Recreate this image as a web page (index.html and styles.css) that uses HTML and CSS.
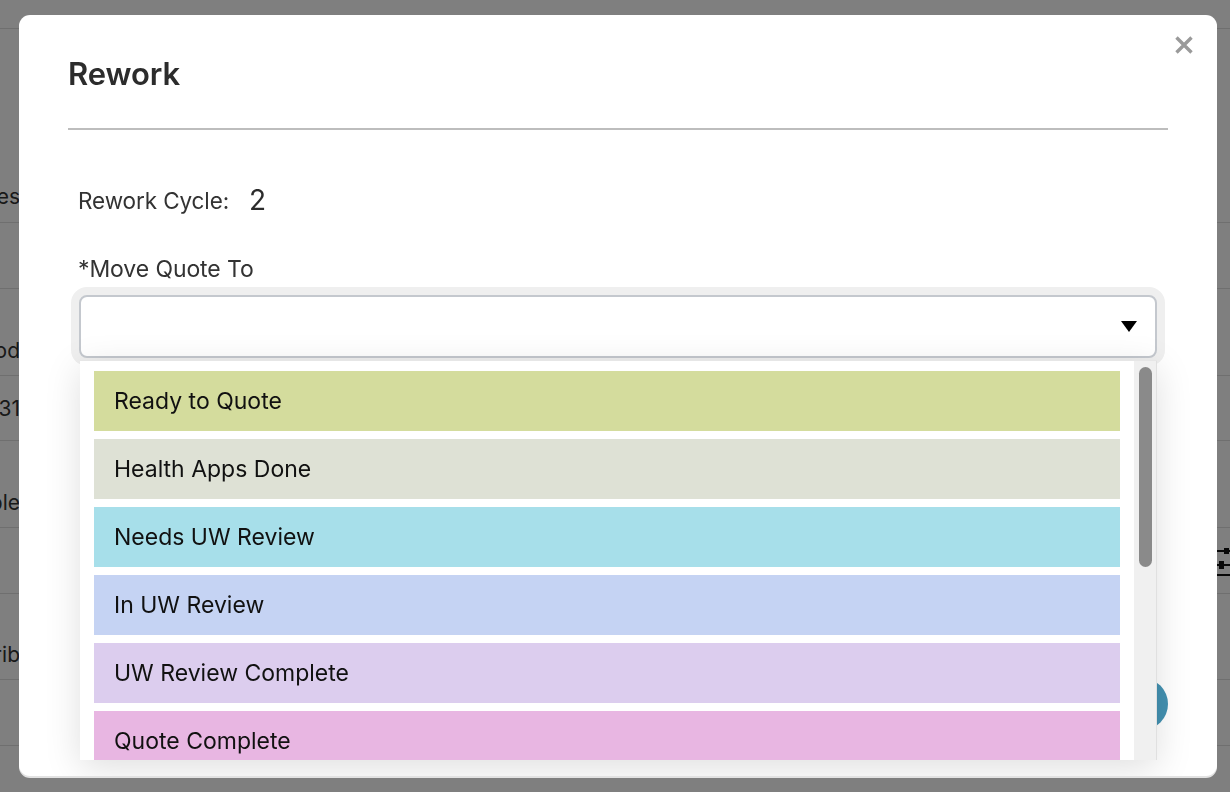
FILE: index.html
```html
<!DOCTYPE html>
<html lang="en">
<head>
<meta charset="utf-8">
<title>Rework</title>
<link rel="stylesheet" href="styles.css">
</head>
<body>
<div class="page">
  <div class="row h28"></div>
  <div class="row h194"><div class="cell"><span>Notes</span></div></div>
  <div class="row h66"></div>
  <div class="row h87"><div class="cell"><span>Good</span></div></div>
  <div class="row h65 mid"><div class="cell"><span>$131</span></div></div>
  <div class="row h87"><div class="cell"><span>Sample</span></div></div>
  <div class="row h66 mid">
    <div class="cell"></div>
    <div class="spacer"></div>
    <svg class="sliders" width="16" height="34" viewBox="0 0 16 34">
      <path d="M0 7h16M0 21h16M0 31h16" stroke="#111" stroke-width="2"/>
      <rect x="8" y="4" width="5" height="6" fill="#111"/>
      <rect x="3" y="17" width="5" height="8" fill="#111"/>
    </svg>
  </div>
  <div class="row h86"><div class="cell"><span>Distrib</span></div></div>
  <div class="row h66"></div>
  <div class="row h66"></div>
</div>
<div class="backdrop"></div>
<div class="modal">
  <button class="close" aria-label="Close">
    <svg width="20" height="20" viewBox="0 0 20 20"><path d="M2.5 2.5L17.5 17.5M17.5 2.5L2.5 17.5" stroke="#9a9a9a" stroke-width="3.4" stroke-linecap="butt"/></svg>
  </button>
  <h2 class="title">Rework</h2>
  <div class="divider"></div>
  <div class="body">
    <div class="cycle"><span class="cycle-label">Rework Cycle:</span><span class="cycle-value">2</span></div>
    <div class="field-label">*Move Quote To</div>
    <div class="select-wrap">
      <div class="select"><span class="caret"></span></div>
      <div class="dropdown">
        <div class="options">
          <div class="opt c1">Ready to Quote</div>
          <div class="opt c2">Health Apps Done</div>
          <div class="opt c3">Needs UW Review</div>
          <div class="opt c4">In UW Review</div>
          <div class="opt c5">UW Review Complete</div>
          <div class="opt c6">Quote Complete</div>
          <div class="opt c7">Quote Sent</div>
        </div>
        <div class="track"><div class="thumb"></div></div>
      </div>
    </div>
  </div>
  <div class="fab"></div>
</div>
</body>
</html>
```

FILE: styles.css
```css
* { box-sizing: border-box; }
html, body { margin: 0; padding: 0; }
body {
  width: 1230px;
  height: 792px;
  overflow: hidden;
  background: #ffffff;
  font-family: Inter, "Noto Sans", "Liberation Sans", sans-serif;
  color: #333;
}

/* underlying page */
.page { display: flex; flex-direction: column; }
.row {
  display: flex;
  align-items: flex-end;
  border-bottom: 1px solid #dedede;
}
.row.mid { align-items: center; }
.h28 { height: 29px; }
.h194 { height: 194px; padding-bottom: 13px; }
.h66 { height: 66px; }
.h87 { height: 87px; padding-bottom: 12px; }
.h65 { height: 65px; }
.h86 { height: 86px; padding-bottom: 12px; }
.cell {
  width: 20px;
  display: flex;
  justify-content: flex-end;
  white-space: nowrap;
  font-size: 21px;
  color: #333;
}
.spacer { flex: 1; }
.sliders { margin-right: -2px; }

.backdrop {
  position: fixed;
  inset: 0;
  background: rgba(0, 0, 0, 0.5);
}

/* modal */
.modal {
  position: absolute;
  left: 19px;
  top: 15px;
  width: 1198px;
  height: 761px;
  background: #fff;
  border-radius: 11px;
  box-shadow: 0 2px 0 #e2e2e2;
  padding: 39px 49px 0 49px;
  overflow: hidden;
}
.close {
  position: absolute;
  right: 23px;
  top: 20px;
  width: 20px;
  height: 20px;
  padding: 0;
  border: 0;
  background: none;
  display: flex;
}
.title {
  margin: 0;
  height: 40px;
  line-height: 40px;
  font-size: 31px;
  font-weight: 600;
  color: #2c2c2c;
  letter-spacing: -0.1px;
}
.divider {
  margin-top: 34px;
  height: 2px;
  background: #bdbdbd;
}
.body { padding: 0 10px; }
.cycle {
  margin-top: 54px;
  height: 32px;
  display: flex;
  align-items: center;
}
.cycle-label {
  font-size: 22.5px;
  color: #333;
  letter-spacing: -0.1px;
}
.cycle-value {
  margin-left: 20px;
  font-size: 28px;
  color: #2c2c2c;
}
.field-label {
  margin-top: 38px;
  height: 30px;
  line-height: 30px;
  font-size: 23px;
  color: #333;
  letter-spacing: -0.1px;
}
.select-wrap {
  position: relative;
  margin: 11px 1px 0 1px;
}
.select {
  height: 63px;
  border: 2px solid #c4c8ce;
  border-radius: 8px;
  box-shadow: 0 0 0 8px #efefef;
  display: flex;
  align-items: center;
  justify-content: flex-end;
  padding-right: 18px;
  background: #fff;
}
.caret {
  width: 0;
  height: 0;
  border-left: 8px solid transparent;
  border-right: 8px solid transparent;
  border-top: 11px solid #000;
}
.dropdown {
  position: absolute;
  left: 1px;
  right: 0;
  top: 65px;
  height: 400px;
  background: #fff;
  border-top: 1px solid #e6e6e6;
  box-shadow: 0 8px 34px rgba(0, 0, 0, 0.13);
  display: flex;
  overflow: hidden;
  z-index: 2;
}
.options {
  flex: 1;
  padding: 10px 14px 0 14px;
  display: flex;
  flex-direction: column;
  gap: 8px;
}
.opt {
  flex: none;
  height: 60px;
  display: flex;
  align-items: center;
  padding-left: 20px;
  font-size: 23px;
  color: #111;
}
.c1 { background: #d4dc9d; }
.c2 { background: #dee1d5; }
.c3 { background: #a7dfea; }
.c4 { background: #c5d3f3; }
.c5 { background: #dccdee; }
.c6 { background: #e8b6e2; }
.c7 { background: #f3c9b4; }
.track {
  width: 23px;
  background: #f0f0f0;
  border-right: 1px solid #e0e0e0;
  padding: 6px 4px 0 5px;
}
.thumb {
  height: 200px;
  background: #8a8a8a;
  border-radius: 7px;
}
.fab {
  position: absolute;
  left: 1097px;
  top: 663px;
  width: 52px;
  height: 52px;
  border-radius: 50%;
  background: #4391b1;
  z-index: 1;
}
```
